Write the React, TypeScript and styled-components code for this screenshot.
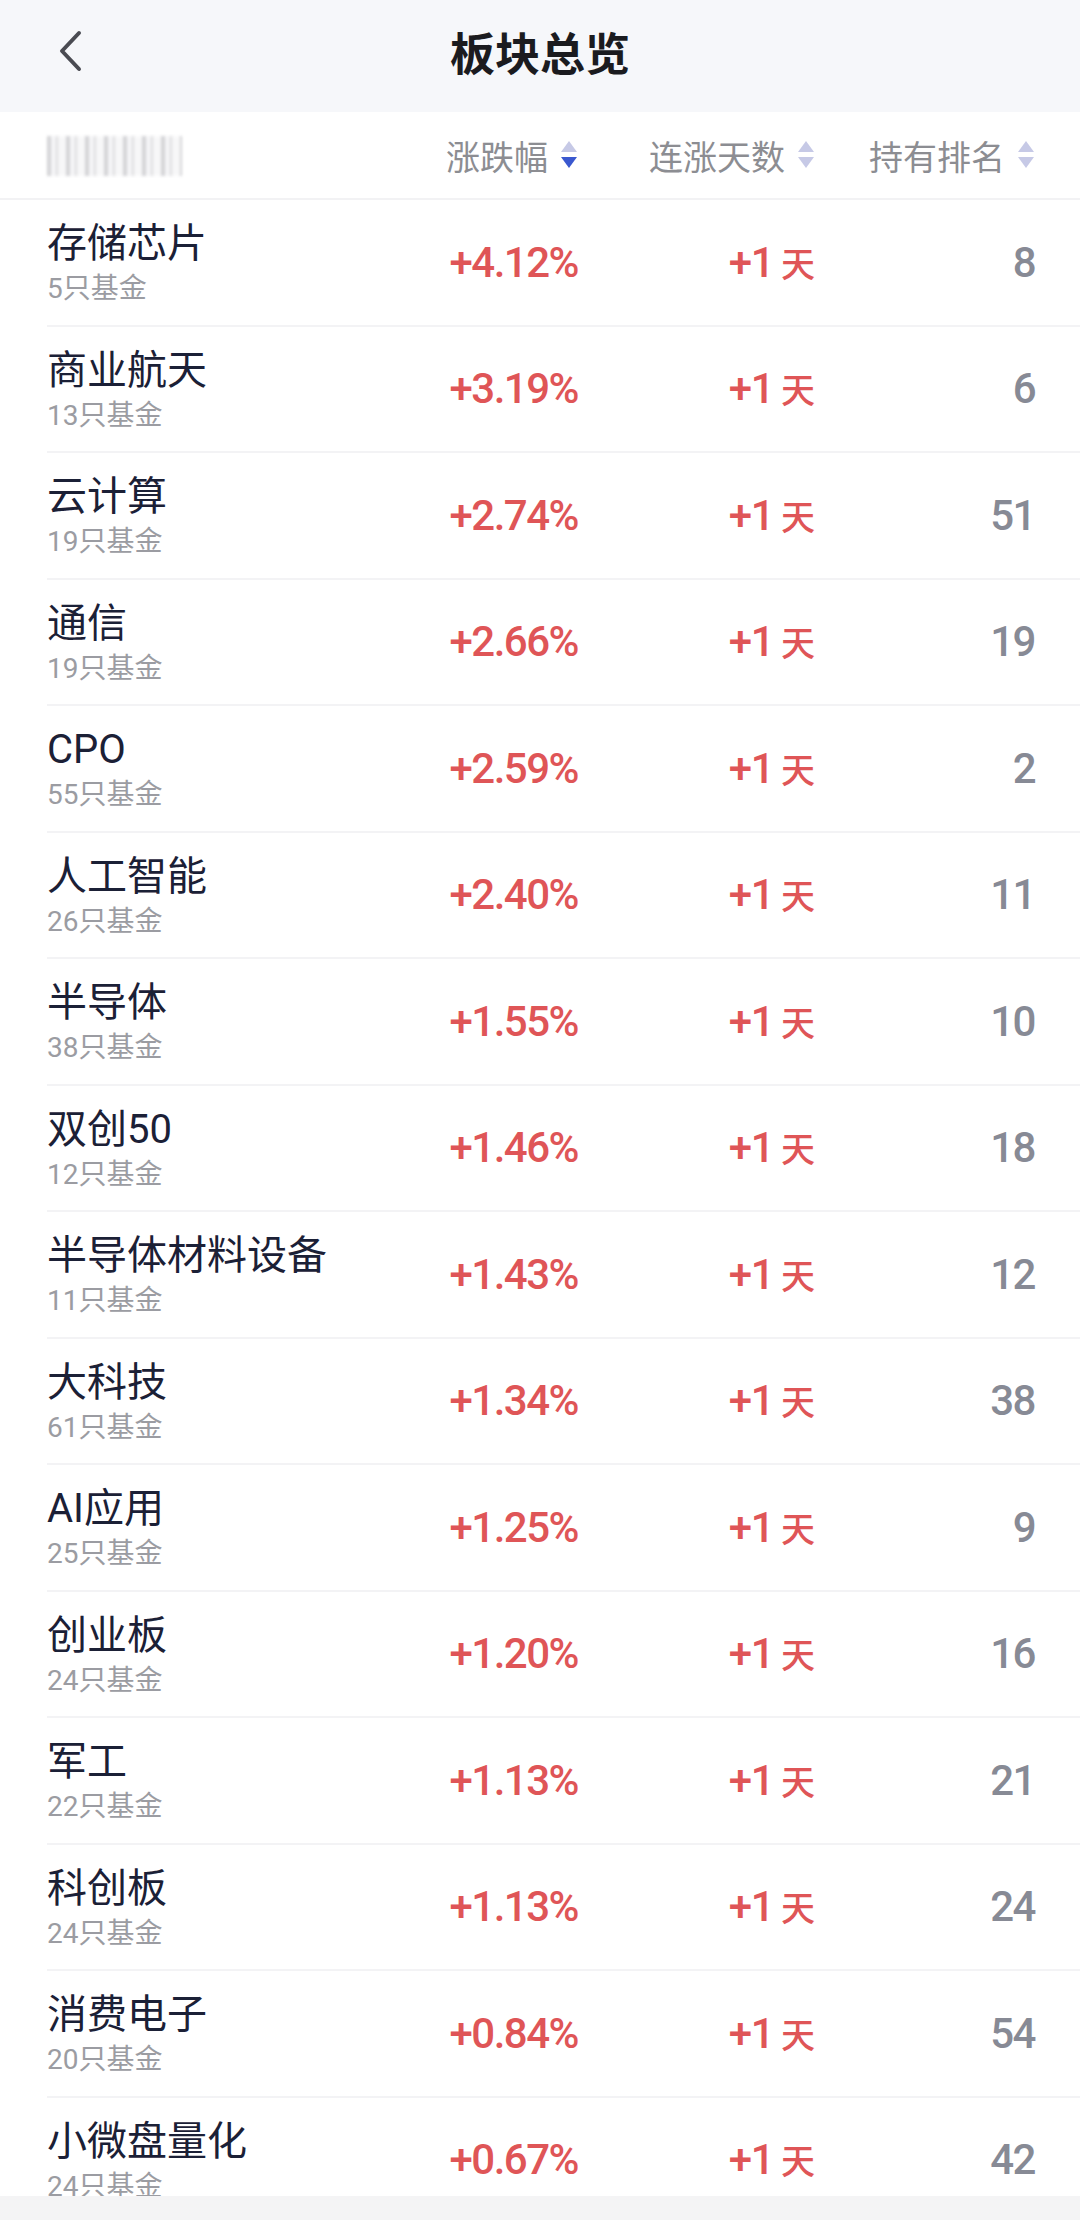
import { createGlobalStyle, styled } from "styled-components";

const GlobalStyle = createGlobalStyle`
  html, body {
    margin: 0;
    padding: 0;
    background: #ffffff;
  }
  body {
    font-family: Roboto, "Noto Sans CJK SC", sans-serif;
  }
`;

interface Sector {
  name: string;
  funds: number;
  change: string;
  days: number;
  rank: number;
}

const sectors: Sector[] = [
  { name: "存储芯片", funds: 5, change: "+4.12%", days: 1, rank: 8 },
  { name: "商业航天", funds: 13, change: "+3.19%", days: 1, rank: 6 },
  { name: "云计算", funds: 19, change: "+2.74%", days: 1, rank: 51 },
  { name: "通信", funds: 19, change: "+2.66%", days: 1, rank: 19 },
  { name: "CPO", funds: 55, change: "+2.59%", days: 1, rank: 2 },
  { name: "人工智能", funds: 26, change: "+2.40%", days: 1, rank: 11 },
  { name: "半导体", funds: 38, change: "+1.55%", days: 1, rank: 10 },
  { name: "双创50", funds: 12, change: "+1.46%", days: 1, rank: 18 },
  { name: "半导体材料设备", funds: 11, change: "+1.43%", days: 1, rank: 12 },
  { name: "大科技", funds: 61, change: "+1.34%", days: 1, rank: 38 },
  { name: "AI应用", funds: 25, change: "+1.25%", days: 1, rank: 9 },
  { name: "创业板", funds: 24, change: "+1.20%", days: 1, rank: 16 },
  { name: "军工", funds: 22, change: "+1.13%", days: 1, rank: 21 },
  { name: "科创板", funds: 24, change: "+1.13%", days: 1, rank: 24 },
  { name: "消费电子", funds: 20, change: "+0.84%", days: 1, rank: 54 },
  { name: "小微盘量化", funds: 24, change: "+0.67%", days: 1, rank: 42 },
];

const Screen = styled.div`
  width: 1080px;
  height: 2220px;
  display: flex;
  flex-direction: column;
  overflow: hidden;
  background: #ffffff;
`;

const NavBar = styled.header`
  height: 112px;
  flex-shrink: 0;
  display: flex;
  align-items: center;
  justify-content: center;
  position: relative;
  background: #f6f7fa;
`;

const BackButton = styled.button`
  position: absolute;
  left: 50px;
  top: 26px;
  width: 40px;
  height: 50px;
  padding: 0;
  border: none;
  background: transparent;
  display: flex;
  align-items: center;
  justify-content: center;
`;

const Title = styled.h1`
  margin: 0 0 10px;
  font-size: 45px;
  font-weight: 700;
  color: #1b1b1f;
  letter-spacing: 0;
`;

const ColumnHeader = styled.div`
  height: 86px;
  flex-shrink: 0;
  display: grid;
  grid-template-columns: 1fr 160px 237px 220px;
  align-items: center;
  padding: 0 45px 0 47px;
  border-bottom: 2px solid #f2f2f4;
`;

const BlurredLabel = styled.div`
  width: 135px;
  height: 40px;
  margin-top: 2px;
  background: repeating-linear-gradient(
    90deg,
    #cfcfd2 0px,
    #cfcfd2 4px,
    #f4f4f6 4px,
    #f4f4f6 9px,
    #d8d8db 9px,
    #d8d8db 11px,
    #f7f7f8 11px,
    #f7f7f8 19px
  );
  filter: blur(1.4px);
  opacity: 0.9;
`;

const SortCell = styled.div`
  display: flex;
  align-items: center;
  justify-content: flex-end;
  gap: 12px;
  font-size: 34px;
  color: #8c8d92;
`;

const List = styled.div`
  flex: 1;
  overflow: hidden;
`;

const Row = styled.div`
  height: 124.5px;
  margin-left: 47px;
  padding-right: 45px;
  display: grid;
  grid-template-columns: 1fr 160px 237px 220px;
  align-items: center;
  border-bottom: 2px solid #f3f3f5;
`;

const NameCell = styled.div`
  display: flex;
  flex-direction: column;
  gap: 4px;
`;

const Name = styled.span`
  font-size: 40px;
  line-height: 50px;
  color: #1b2036;
`;

const FundCount = styled.span`
  font-size: 28px;
  line-height: 32px;
  color: #9b9ca2;
`;

const Value = styled.div<{ $tone?: "up" | "muted" }>`
  display: flex;
  align-items: baseline;
  justify-content: flex-end;
  font-size: 42px;
  font-weight: 500;
  letter-spacing: -1.5px;
  color: ${({ $tone }) => ($tone === "muted" ? "#878a95" : "#df5557")};
`;

const DayUnit = styled.span`
  font-size: 34px;
  margin-left: 8px;
  letter-spacing: 0;
`;

const BottomBar = styled.div`
  height: 24px;
  flex-shrink: 0;
  background: #f4f4f5;
`;

function SortArrows({ active }: { active?: "down" | "up" }) {
  const idle = "#c6c9e6";
  const on = "#3a58cf";
  return (
    <svg width="18" height="30" viewBox="0 0 18 30">
      <path d="M9 1 L17 12 L1 12 Z" fill={active === "up" ? on : idle} />
      <path d="M1 17 L17 17 L9 28 Z" fill={active === "down" ? on : idle} />
    </svg>
  );
}

export default function App() {
  return (
    <>
      <GlobalStyle />
      <Screen>
        <NavBar>
          <BackButton aria-label="返回">
            <svg width="26" height="44" viewBox="0 0 26 44">
              <path
                d="M22 4 L5 22 L22 40"
                fill="none"
                stroke="#4a4b52"
                strokeWidth="4"
                strokeLinecap="round"
                strokeLinejoin="round"
              />
            </svg>
          </BackButton>
          <Title>板块总览</Title>
        </NavBar>

        <ColumnHeader>
          <BlurredLabel />
          <SortCell>
            涨跌幅
            <SortArrows active="down" />
          </SortCell>
          <SortCell>
            连涨天数
            <SortArrows />
          </SortCell>
          <SortCell>
            持有排名
            <SortArrows />
          </SortCell>
        </ColumnHeader>

        <List>
          {sectors.map((s) => (
            <Row key={s.name}>
              <NameCell>
                <Name>{s.name}</Name>
                <FundCount>{s.funds}只基金</FundCount>
              </NameCell>
              <Value>{s.change}</Value>
              <Value>
                +{s.days}
                <DayUnit>天</DayUnit>
              </Value>
              <Value $tone="muted">{s.rank}</Value>
            </Row>
          ))}
        </List>

        <BottomBar />
      </Screen>
    </>
  );
}
